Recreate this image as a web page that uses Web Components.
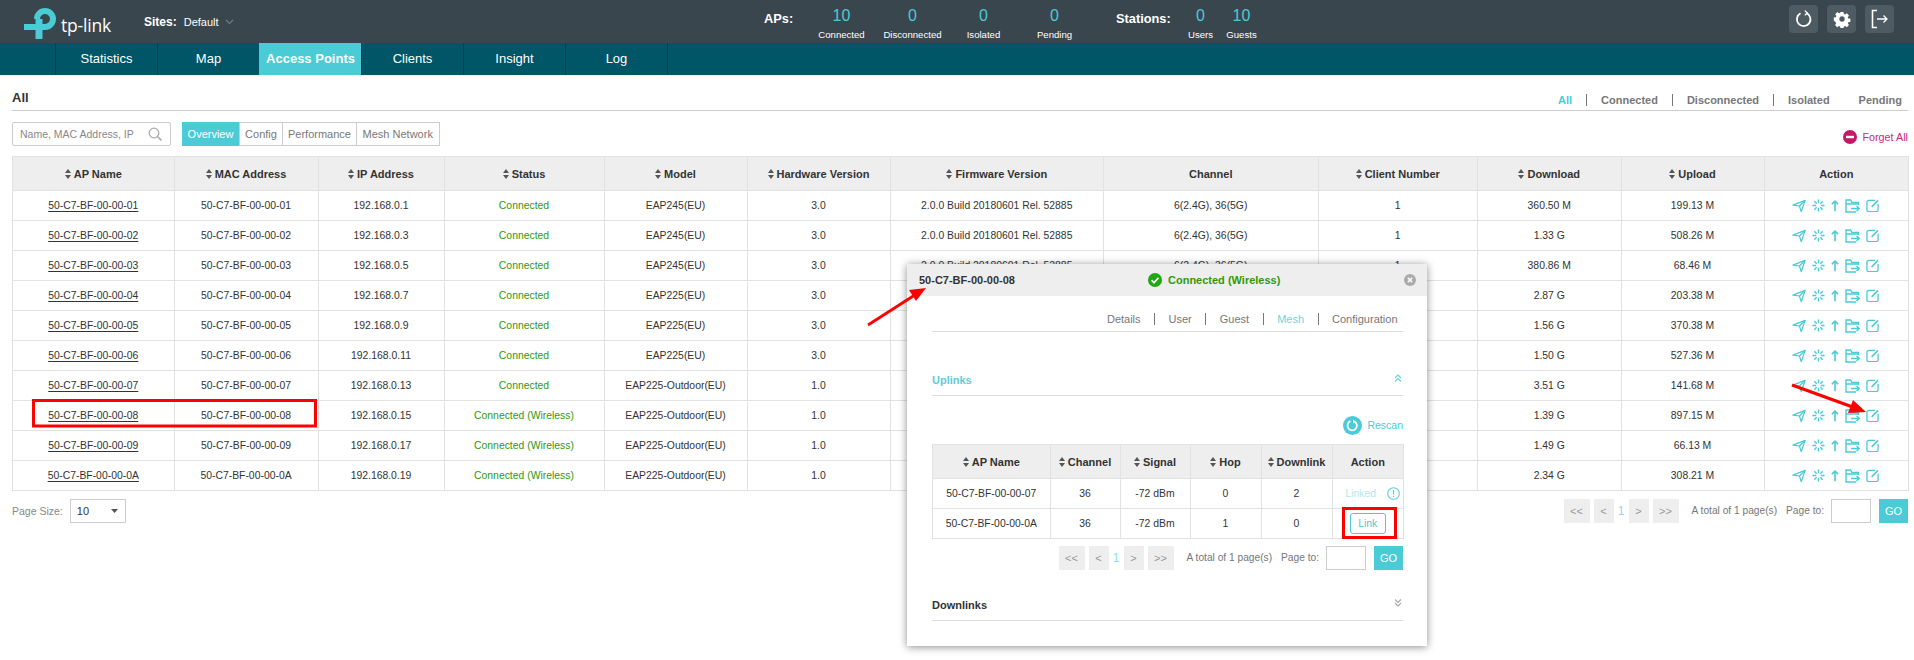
<!DOCTYPE html>
<html>
<head>
<meta charset="utf-8">
<title>Access Points</title>
<style>
	html, body { margin: 0; padding: 0; background: #fff; height: 660px; overflow: hidden; font-family: "Liberation Sans", Arial, sans-serif; }
</style>
</head>
<body>
<template id="icons">
	<svg data-i="send" width="14" height="14" viewBox="0 0 16 15" fill="none" stroke="#4acbd6" stroke-width="1.400" stroke-linejoin="round"><path d="M1 6.500 15 1 10.500 14 8.500 7.500z"/><path d="M8.500 7.500 15 1"/></svg>
	<svg data-i="burst" width="13" height="13" viewBox="0 0 14 14" fill="none" stroke="#4acbd6" stroke-width="1.500"><path d="M7 0.500v4M7 9.500v4M0.500 7h4M9.500 7h4M2.500 2.500l2.600 2.600M9 9l2.500 2.500M11.500 2.500 9 5M5 9l-2.500 2.500"/></svg>
	<svg data-i="up" width="8" height="13" viewBox="0 0 9 13" fill="none" stroke="#4acbd6" stroke-width="1.800"><path d="M4.500 13V1.500M1 5l3.500-3.500L8 5"/></svg>
	<svg data-i="folder" width="15" height="14" viewBox="0 0 15 14" fill="none" stroke="#4acbd6" stroke-width="1.400"><path d="M13.500 6V3.500H7L5.500 1H1v12h10"/><path d="M1 5h12.500M6 9.500h8M11.500 7l2.700 2.500-2.700 2.500"/></svg>
	<svg data-i="edit" width="13" height="13" viewBox="0 0 14 14" fill="none" stroke="#4acbd6" stroke-width="1.400"><path d="M10 1.500H3A2 2 0 0 0 1 3.500v8A2 2 0 0 0 3 13.500h8a2 2 0 0 0 2-2V5"/><path d="M6 8.500 13 1.500" stroke-width="1.600"/></svg>
	<svg data-i="sort" width="6" height="10" viewBox="0 0 6 10" fill="#555"><path d="M3 0 6 4H0zM3 10 0 6H6z"/></svg>
</template>

<tp-page>
	<tp-header></tp-header>
	<tp-nav>
		<nav-item>Statistics</nav-item>
		<nav-item>Map</nav-item>
		<nav-item active>Access Points</nav-item>
		<nav-item>Clients</nav-item>
		<nav-item>Insight</nav-item>
		<nav-item>Log</nav-item>
	</tp-nav>
	<ap-content></ap-content>
	<ap-modal></ap-modal>
	<red-marks></red-marks>
</tp-page>

<script>
const icon = (name) => document.getElementById("icons").content.querySelector(`[data-i="${name}"]`).outerHTML;
const sortable = (text) => `<span class="sh">${icon("sort")}<span>${text}</span></span>`;

class TpPage extends HTMLElement {
	constructor() {
		super();
		this.attachShadow({mode: 'open'}).innerHTML = `
			<style>
			:host { display: block; position: relative; width: 1914px; height: 660px; overflow: hidden; }
			</style>
			<slot></slot>`;
	}
}

class TpStat extends HTMLElement {
	constructor() {
		super();
		this.attachShadow({mode: 'open'}).innerHTML = `
			<style>
			:host { display: flex; flex-direction: column; align-items: center; flex: 0 0 auto; }
			.v { color: #4acbd6; font-size: 16px; line-height: 18px; margin-top: 7px; }
			.l { color: #fff; font-size: 9.600px; line-height: 12px; margin-top: 4px; white-space: nowrap; }
			</style>
			<div class="v"></div><div class="l"></div>`;
	}
	connectedCallback() {
		this.shadowRoot.querySelector(".v").textContent = this.getAttribute("value");
		this.shadowRoot.querySelector(".l").textContent = this.getAttribute("label");
	}
}

class TpHeader extends HTMLElement {
	constructor() {
		super();
		this.attachShadow({mode: 'open'}).innerHTML = `
			<style>
			:host { display: flex; height: 43px; background: #3a464e; color: #fff; align-items: stretch; }
			.left { flex: 0 0 764px; display: flex; align-items: center; position: relative; }
			.logo { flex: 0 0 144px; display: flex; align-items: flex-start; }
			.logo svg { margin: 2px 0 0 23px; flex: none; }
			.brand { font: 400 17.500px/1 "Open Sans", sans-serif; margin: 13px 0 0 2px; letter-spacing: -.2px; }
			.site { font-size: 12px; font-weight: bold; }
			.def { font-size: 11px; margin-left: 7px; }
			.left svg.chev { margin: 1px 0 0 6px; }
			.stats { display: flex; align-items: flex-start; }
			.cap { font-weight: bold; font-size: 12.800px; line-height: 38px; white-space: nowrap; }
			.slot { display: flex; justify-content: center; }
			.a { width: 71px; }
			.b { width: 41px; }
			.right { margin-left: auto; display: flex; gap: 9px; padding: 5px 20px 0 0; }
			.btn { width: 29px; height: 28px; border-radius: 4px; background: #4f5b63; display: flex; align-items: center; justify-content: center; }
			</style>
			<div class="left">
				<div class="logo">
					<svg width="36" height="34" viewBox="23 2 36 34" fill="none" stroke="#4acbd6" stroke-width="6">
						<path d="M24 23H45A8 8 0 1 0 37 15"/>
						<path d="M39 15V35" stroke-width="7"/>
					</svg>
					<span class="brand">tp-link</span>
				</div>
				<span class="site">Sites:</span><span class="def">Default</span>
				<svg class="chev" width="9" height="6" viewBox="0 0 9 6" fill="none" stroke="#6f7b83" stroke-width="1.200"><path d="M1 1l3.500 3.500L8 1"/></svg>
			</div>
			<div class="stats">
				<span class="cap" style="width:42px">APs:</span>
				<div class="slot a"><tp-stat value="10" label="Connected"></tp-stat></div>
				<div class="slot a"><tp-stat value="0" label="Disconnected"></tp-stat></div>
				<div class="slot a"><tp-stat value="0" label="Isolated"></tp-stat></div>
				<div class="slot a"><tp-stat value="0" label="Pending"></tp-stat></div>
				<span class="cap" style="margin-left:26px;width:64px">Stations:</span>
				<div class="slot b"><tp-stat value="0" label="Users"></tp-stat></div>
				<div class="slot b"><tp-stat value="10" label="Guests"></tp-stat></div>
			</div>
			<div class="right">
				<div class="btn"><svg width="18" height="18" viewBox="0 0 18 18" fill="none" stroke="#fff" stroke-width="1.800"><path d="M11.500 3.100A6.800 6.800 0 1 1 5.500 3.300"/><path d="M9.800 .6 12.300 3 9.800 5.200" stroke-width="1.300"/></svg></div>
				<div class="btn"><svg width="18" height="18" viewBox="0 0 18 18"><path fill="#fff" fill-rule="evenodd" d="M7.300 1h3.400l.4 2.300 1.400.6 1.900-1.300 2.400 2.400-1.300 1.900.6 1.400 2.300.4v3.400l-2.300.4-.6 1.400 1.300 1.900-2.400 2.400-1.900-1.300-1.400.6-.4 2.300H7.300l-.4-2.300-1.400-.6-1.900 1.300-2.400-2.400 1.300-1.900-.6-1.400L-.2 10.700V7.300l2.300-.4.600-1.400-1.300-1.900 2.400-2.400 1.900 1.300 1.400-.6zM9 6a3 3 0 1 0 0 6 3 3 0 0 0 0-6z" transform="translate(1 1) scale(.89)"/></svg></div>
				<div class="btn"><svg width="18" height="20" viewBox="0 0 18 20" fill="none" stroke="#fff"><path d="M6 1.500H1.500v17H6" stroke-width="1.600"/><path d="M6 10h10M12.500 6.500 16 10l-3.500 3.500" stroke-width="1.300"/></svg></div>
			</div>`;
	}
}

class TpNav extends HTMLElement {
	constructor() {
		super();
		this.attachShadow({mode: 'open'}).innerHTML = `
			<style>
			:host { display: flex; height: 32px; background: #005566; padding-left: 55px; }
			</style>
			<slot></slot>`;
	}
}

class NavItem extends HTMLElement {
	constructor() {
		super();
		this.attachShadow({mode: 'open'}).innerHTML = `
			<style>
			:host { display: block; width: 101px; border-left: 1px solid #00404d; color: #fff; font-size: 13px; line-height: 32px; text-align: center; }
			:host(:last-of-type) { border-right: 1px solid #00404d; }
			:host([active]) { background: #4acbd6; font-weight: bold; border-left-color: #4acbd6; }
			</style>
			<slot></slot>`;
	}
}

class SubTabs extends HTMLElement {
	constructor() {
		super();
		this.attachShadow({mode: 'open'}).innerHTML = `
			<style>
			:host { display: flex; align-items: center; }
			</style>
			<slot></slot>`;
	}
}

class SubTab extends HTMLElement {
	constructor() {
		super();
		this.attachShadow({mode: 'open'}).innerHTML = `
			<style>
			:host { display: block; position: relative; color: var(--tab-color, #777); font-size: var(--tab-size, 11px); font-weight: var(--tab-weight, normal); line-height: 12px; padding: 0 var(--tab-pad, 14px); border-right: 1px solid #777; white-space: nowrap; }
			:host([active]) { color: #4acbd6; }
			:host([nosep]) { border-right-color: transparent; }
			:host(:last-of-type) { border-right: 0; }
			</style>
			<slot></slot>`;
	}
}

class TpPager extends HTMLElement {
	constructor() {
		super();
		this.attachShadow({mode: 'open'}).innerHTML = `
			<style>
			:host { display: flex; align-items: center; height: 24px; font-size: 10.200px; color: #777; }
			.p { height: 24px; background: #eee; color: #999; display: flex; align-items: center; justify-content: center; font-size: 11px; }
			.w1 { width: 26px; } .w2 { width: 20px; }
			.n { width: 15px; text-align: center; color: #8fdbe3; font-size: 12px; }
			.t { margin-left: 13px; white-space: nowrap; }
			.to { margin-left: 9px; white-space: nowrap; }
			.inp { width: 38px; height: 22px; border: 1px solid #ccc; margin-left: 7px; background: #fff; }
			.go { width: 29px; height: 24px; background: #4acbd6; color: #fff; font-size: 11px; display: flex; align-items: center; justify-content: center; margin-left: 8px; }
			</style>
			<div class="p w1">&lt;&lt;</div>
			<div class="p w2" style="margin-left:4px">&lt;</div>
			<div class="n">1</div>
			<div class="p w2">&gt;</div>
			<div class="p w1" style="margin-left:4px">&gt;&gt;</div>
			<div class="t">A total of 1 page(s)</div>
			<div class="to">Page to:</div>
			<div class="inp"></div>
			<div class="go">GO</div>`;
	}
}

const tableStyle = `
	table { border-collapse: collapse; table-layout: fixed; width: 100%; font-size: 10.400px; color: #333; }
	th, td { border: 1px solid #e2e2e2; text-align: center; padding: 0; white-space: nowrap; overflow: hidden; }
	th { background: #eee; height: 33px; font-size: 11px; font-weight: bold; color: #333; }
	td { height: 29px; }
	.sh { display: inline-flex; align-items: center; gap: 3px; vertical-align: middle; }
`;

class ApTable extends HTMLElement {
	constructor() {
		super();
		const widths = [161.5, 144, 126, 160, 143, 143, 213.5, 214.5, 159.5, 143.5, 143, 144.5];
		const heads = ["AP Name", "MAC Address", "IP Address", "Status", "Model", "Hardware Version", "Firmware Version", "", "Client Number", "Download", "Upload", ""];
		const fw = "2.0.0 Build 20180601 Rel. 52885", ch = "6(2.4G), 36(5G)";
		const m225 = "EAP225(EU)", out = "EAP225-Outdoor(EU)", m245 = "EAP245(EU)";
		const rows = [
			["01", "1", 0, m245, "3.0", fw, ch, "1", "360.50 M", "199.13 M"],
			["02", "3", 0, m245, "3.0", fw, ch, "1", "1.33 G", "508.26 M"],
			["03", "5", 0, m245, "3.0", fw, ch, "1", "380.86 M", "68.46 M"],
			["04", "7", 0, m225, "3.0", "", "", "", "2.87 G", "203.38 M"],
			["05", "9", 0, m225, "3.0", "", "", "", "1.56 G", "370.38 M"],
			["06", "11", 0, m225, "3.0", "", "", "", "1.50 G", "527.36 M"],
			["07", "13", 0, out, "1.0", "", "", "", "3.51 G", "141.68 M"],
			["08", "15", 1, out, "1.0", "", "", "", "1.39 G", "897.15 M"],
			["09", "17", 1, out, "1.0", "", "", "", "1.49 G", "66.13 M"],
			["0A", "19", 1, out, "1.0", "", "", "", "2.34 G", "308.21 M"],
		];
		const actions = `<div class="acts">${["send", "burst", "up", "folder", "edit"].map(icon).join("")}</div>`;
		const body = rows.map((r) => {
			const mac = `50-C7-BF-00-00-${r[0]}`;
			return `<tr><td><u>${mac}</u></td><td>${mac}</td><td>192.168.0.${r[1]}</td>
				<td class="ok">${r[2] ? "Connected (Wireless)" : "Connected"}</td>
				<td>${r[3]}</td><td>${r[4]}</td><td>${r[5]}</td><td>${r[6]}</td><td>${r[7]}</td><td>${r[8]}</td><td>${r[9]}</td><td>${actions}</td></tr>`;
		}).join("");
		this.attachShadow({mode: 'open'}).innerHTML = `
			<style>
			:host { display: block; }
			${tableStyle}
			.ok { color: #2f9a0a; }
			u { text-underline-offset: 2px; }
			.acts { display: flex; justify-content: center; align-items: center; gap: 6px; padding-right: 2px; }
			</style>
			<table>
				<colgroup>${widths.map((w) => `<col style="width:${w}px">`).join("")}</colgroup>
				<tr>${heads.map((h, i) => `<th>${i === 7 ? "Channel" : i === 11 ? "Action" : sortable(h)}</th>`).join("")}</tr>
				${body}
			</table>`;
	}
}

class ApContent extends HTMLElement {
	constructor() {
		super();
		this.attachShadow({mode: 'open'}).innerHTML = `
			<style>
			:host { display: block; padding: 0 6px 0 12px; --tab-weight: bold; }
			.title { height: 35px; border-bottom: 1px solid #ccc; display: flex; align-items: center; justify-content: space-between; box-sizing: content-box; }
			.title b { font-size: 13px; color: #333; margin-top: 9px; }
			.title sub-tabs { margin-top: 15px; }
			.bar { display: flex; align-items: center; height: 24px; margin: 11px 0 10px; }
			.search { width: 157px; height: 22px; border: 1px solid #ccc; border-radius: 2px; display: flex; align-items: center; justify-content: space-between; flex: none; margin-right: 11px; }
			.search span { color: #888; font-size: 10.500px; margin-left: 7px; white-space: nowrap; }
			.search svg { margin-right: 8px; }
			.seg { display: flex; height: 24px; border: 1px solid #ccc; box-sizing: border-box; font-size: 11px; color: #777; line-height: 22px; }
			.seg div { box-sizing: border-box; text-align: center; border-left: 1px solid #ccc; }
			.seg div:first-child { border-left: 0; background: #4acbd6; color: #fff; margin: -1px 0 -1px -1px; line-height: 24px; }
			.forget { margin-left: auto; display: flex; align-items: center; gap: 5px; color: #cc2a78; font-size: 10.800px; margin-top: 6px; }
			.foot { display: flex; justify-content: space-between; align-items: center; margin-top: 7.500px; }
			.size { display: flex; align-items: center; color: #888; font-size: 10.500px; }
			.sel { width: 54px; height: 22px; border: 1px solid #ccc; margin-left: 7px; display: flex; align-items: center; justify-content: space-between; color: #333; font-size: 11px; }
			.sel span { margin-left: 6px; }
			.sel svg { margin-right: 7px; }
			</style>
			<div class="title">
				<b>All</b>
				<sub-tabs>
					<sub-tab active>All</sub-tab>
					<sub-tab>Connected</sub-tab>
					<sub-tab>Disconnected</sub-tab>
					<sub-tab nosep>Isolated</sub-tab>
					<sub-tab style="padding-right:6px">Pending</sub-tab>
				</sub-tabs>
			</div>
			<div class="bar">
				<div class="search"><span>Name, MAC Address, IP</span>
					<svg width="14" height="14" viewBox="0 0 14 14" fill="none" stroke="#aaa" stroke-width="1.300"><circle cx="6" cy="6" r="4.800"/><path d="M9.500 9.500 13.500 13.500" stroke-width="1.600"/></svg>
				</div>
				<div class="seg">
					<div style="width:57px">Overview</div>
					<div style="width:43px">Config</div>
					<div style="width:74px">Performance</div>
					<div style="width:82.500px">Mesh Network</div>
				</div>
				<div class="forget">
					<svg width="14" height="14" viewBox="0 0 14 14"><circle cx="7" cy="7" r="7" fill="#c6186a"/><rect x="3" y="5.800" width="8" height="2.400" fill="#fff"/></svg>
					<span>Forget All</span>
				</div>
			</div>
			<ap-table></ap-table>
			<div class="foot">
				<div class="size">Page Size:
					<div class="sel"><span>10</span><svg width="7" height="4" viewBox="0 0 7 4" fill="#555"><path d="M0 0h7L3.500 4z"/></svg></div>
				</div>
				<tp-pager></tp-pager>
			</div>`;
	}
}

class ApModal extends HTMLElement {
	constructor() {
		super();
		const chev = (d, c) => `<svg width="8" height="8" viewBox="0 0 8 8" fill="none" stroke="${c}" stroke-width="1.200"><path d="${d}"/></svg>`;
		this.attachShadow({mode: 'open'}).innerHTML = `
			<style>
			:host { display: block; position: absolute; left: 907px; top: 264px; width: 520px; height: 382px; background: #fff; box-shadow: 0 1px 8px rgba(0,0,0,.45); }
			.head { height: 32px; background: #eee; display: grid; grid-template-columns: 229px auto 1fr; align-items: center; padding: 0 11px 0 12px; }
			.name { font-size: 11px; font-weight: bold; color: #333; }
			.st { display: flex; align-items: center; gap: 6px; color: #2f9a0a; font-size: 11px; font-weight: bold; }
			.x { justify-self: end; display: flex; }
			.body { padding: 0 24px 0 25px; }
			.tabs { height: 35px; border-bottom: 1px solid #ddd; display: flex; justify-content: flex-end; align-items: center; --tab-pad: 13.500px; --tab-weight: normal; }
			.tabs sub-tabs { margin: 11px -8px 0 0; }
			.sec { height: 28px; padding-bottom: 9px; margin-top: 26px; border-bottom: 1px solid #ddd; display: flex; justify-content: space-between; align-items: flex-end; font-size: 11px; font-weight: bold; }
			.sec svg { margin: 0 1px 4px 0; }
			.up { color: #5ccdd9; }
			.down { margin-top: 17px; color: #333; height: 24px; }
			.rescan { display: flex; justify-content: flex-end; align-items: center; gap: 5px; color: #4acbd6; font-size: 10.500px; height: 20px; margin: 19px 0 9px; }
			${tableStyle}
			table { color: #333; }
			.lk { display: flex; align-items: center; justify-content: center; position: relative; color: #b5e6ec; padding-right: 14px; }
			.lk svg { position: absolute; right: 3px; top: -1px; }
			.btn { display: inline-block; width: 34px; height: 19px; line-height: 19px; border: 1px solid #4acbd6; border-radius: 3px; color: #4acbd6; vertical-align: middle; }
			.pg { display: flex; justify-content: flex-end; margin-top: 6.500px; }
			</style>
			<div class="head">
				<div class="name">50-C7-BF-00-00-08</div>
				<div class="st">
					<svg width="14" height="14" viewBox="0 0 14 14"><circle cx="7" cy="7" r="7" fill="#1fa80f"/><path d="M3.500 7.200 6 9.700 10.500 4.800" fill="none" stroke="#fff" stroke-width="1.700"/></svg>
					<span>Connected (Wireless)</span>
				</div>
				<div class="x"><svg width="12" height="12" viewBox="0 0 12 12"><circle cx="6" cy="6" r="6" fill="#aaa"/><path d="M3.800 3.800 8.200 8.200M8.200 3.800 3.800 8.200" stroke="#fff" stroke-width="1.500"/></svg></div>
			</div>
			<div class="body">
				<div class="tabs">
					<sub-tabs>
						<sub-tab>Details</sub-tab>
						<sub-tab>User</sub-tab>
						<sub-tab>Guest</sub-tab>
						<sub-tab active style="color:#6fd4de">Mesh</sub-tab>
						<sub-tab>Configuration</sub-tab>
					</sub-tabs>
				</div>
				<div class="sec up"><span>Uplinks</span>${chev("M1 4 4 1l3 3M1 7.500l3-3 3 3", "#6fd4de")}</div>
				<div class="rescan">
					<svg width="19" height="19" viewBox="0 0 19 19"><circle cx="9.500" cy="9.500" r="9.500" fill="#4acbd6"/><path d="M11.500 5.500A4.700 4.700 0 1 1 7.500 5.200" fill="none" stroke="#fff" stroke-width="1.800"/><path d="M10 3.500 12.500 5.500 10 7.500z" fill="#fff"/></svg>
					<span>Rescan</span>
				</div>
				<table>
					<colgroup><col style="width:117.500px"><col style="width:70px"><col style="width:70px"><col style="width:71px"><col style="width:71px"><col style="width:71.500px"></colgroup>
					<tr><th>${sortable("AP Name")}</th><th>${sortable("Channel")}</th><th>${sortable("Signal")}</th><th>${sortable("Hop")}</th><th>${sortable("Downlink")}</th><th>Action</th></tr>
					<tr><td>50-C7-BF-00-00-07</td><td>36</td><td>-72 dBm</td><td>0</td><td>2</td>
						<td><div class="lk"><span>Linked</span><svg width="13" height="13" viewBox="0 0 13 13" fill="none" stroke="#5ccdd9" stroke-width="1.100"><circle cx="6.500" cy="6.500" r="5.800"/><path d="M6.500 3v4.500M6.500 8.800v1.400" stroke-width="1.300"/></svg></div></td></tr>
					<tr><td>50-C7-BF-00-00-0A</td><td>36</td><td>-72 dBm</td><td>1</td><td>0</td><td><span class="btn">Link</span></td></tr>
				</table>
				<div class="pg"><tp-pager></tp-pager></div>
				<div class="sec down"><span>Downlinks</span>${chev("M1 .5l3 3 3-3M1 4l3 3 3-3", "#aaa")}</div>
			</div>`;
	}
}

class RedMarks extends HTMLElement {
	constructor() {
		super();
		this.attachShadow({mode: 'open'}).innerHTML = `
			<style>
			:host { display: block; position: absolute; left: 0; top: 0; width: 1914px; height: 660px; pointer-events: none; }
			svg { display: block; }
			</style>
			<svg width="1914" height="660" viewBox="0 0 1914 660" fill="none">
				<rect x="33.500" y="400.500" width="282" height="25.500" stroke="#f00" stroke-width="3"/>
				<rect x="1343.500" y="508.500" width="52" height="29" stroke="#f00" stroke-width="3"/>
				<path d="M868 325 914 295.500" stroke="#f00" stroke-width="2.800"/>
				<path d="M926 288 909 290 916 301z" fill="#f00"/>
				<path d="M1792 385 1854 407.500" stroke="#f00" stroke-width="3"/>
				<path d="M1866 412 1853 400 1848 413z" fill="#f00"/>
			</svg>`;
	}
}

customElements.define('tp-page', TpPage);
customElements.define('tp-stat', TpStat);
customElements.define('tp-header', TpHeader);
customElements.define('tp-nav', TpNav);
customElements.define('nav-item', NavItem);
customElements.define('sub-tabs', SubTabs);
customElements.define('sub-tab', SubTab);
customElements.define('tp-pager', TpPager);
customElements.define('ap-table', ApTable);
customElements.define('ap-content', ApContent);
customElements.define('ap-modal', ApModal);
customElements.define('red-marks', RedMarks);
</script>
</body>
</html>
